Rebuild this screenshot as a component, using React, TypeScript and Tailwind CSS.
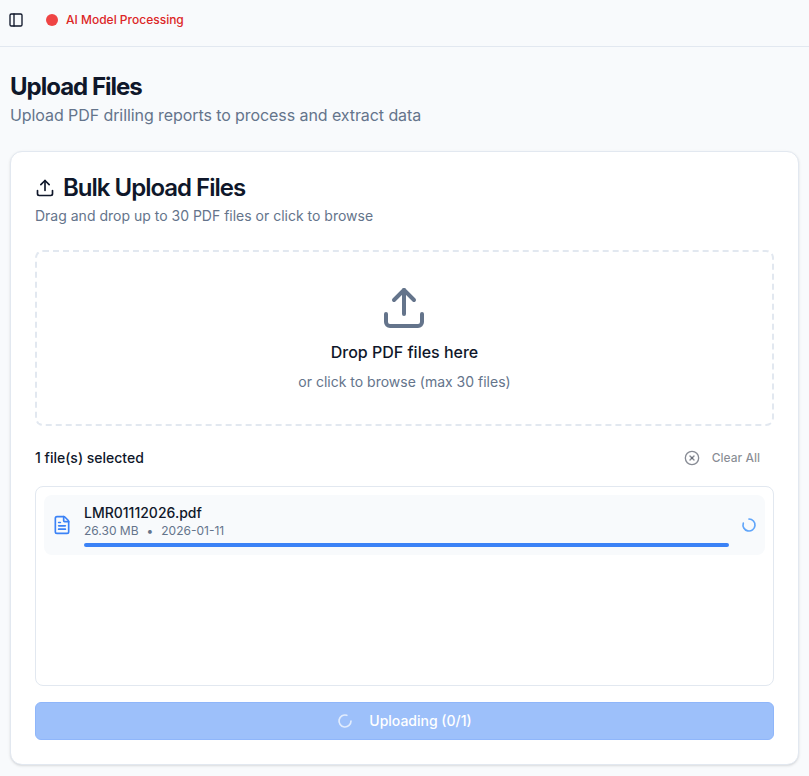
import React from 'react';
import { CircleX, FileText, Loader2, PanelLeft, Upload } from 'lucide-react';

const App: React.FC = () => {
  return (
    <div className="min-h-[776px] bg-[#f8fafc] font-['Inter','Liberation_Sans',sans-serif] text-[#0f172a]">
      <header className="flex h-[47px] items-start border-b border-[#e2e8f0] pl-[2px] pt-[6px]">
        <button className="flex h-7 w-7 items-center justify-center">
          <PanelLeft className="h-4 w-4" />
        </button>
        <div className="ml-4 flex h-7 items-center gap-2">
          <span className="h-3 w-3 rounded-full bg-[#ef4444]" />
          <span className="text-xs font-medium text-[#dc2626]">AI Model Processing</span>
        </div>
      </header>

      <main className="px-[10px] pt-6">
        <h1 className="text-2xl font-bold tracking-[-1px]">Upload Files</h1>
        <p className="text-base tracking-[-0.08px] text-[#64748b]">Upload PDF drilling reports to process and extract data</p>

        <section className="mt-6 rounded-xl border border-[#e2e8f0] bg-white shadow-sm">
          <div className="p-6">
            <h2 className="flex items-center gap-2 text-2xl leading-none font-semibold tracking-[-1px]">
              <Upload className="h-5 w-5" />
              Bulk Upload Files
            </h2>
            <p className="mt-1.5 text-sm text-[#64748b]">Drag and drop up to 30 PDF files or click to browse</p>
          </div>

          <div className="px-6 pb-6">
            <div className="flex flex-col items-center rounded-lg border-2 border-dashed border-[#e2e8f0] py-8">
              <Upload className="mr-px h-12 w-12 text-[#64748b]" />
              <p className="mt-2 text-base font-medium">Drop PDF files here</p>
              <p className="mt-2 text-sm text-[#64748b]">or click to browse (max 30 files)</p>
            </div>

            <div className="mt-3 flex h-10 items-center justify-between">
              <span className="text-sm font-medium">1 file(s) selected</span>
              <button className="flex items-center gap-3 pl-3 pr-[14px] text-xs font-medium text-[#0f172a]/50">
                <CircleX className="h-4 w-4" />
                Clear All
              </button>
            </div>

            <div className="mt-2 h-[200px] rounded-lg border border-[#e2e8f0] p-2">
              <div className="flex items-center gap-3 rounded-lg bg-[#f8fafc] p-2">
                <FileText className="h-5 w-5 shrink-0 text-[#3b82f6]" />
                <div className="min-w-0 flex-1">
                  <p className="text-sm font-medium">LMR01112026.pdf</p>
                  <p className="flex items-center gap-2 text-xs text-[#64748b]">
                    <span>26.30 MB</span>
                    <span>•</span>
                    <span>2026-01-11</span>
                  </p>
                  <div className="mt-1 h-1 rounded-full bg-[#3b82f6]" />
                </div>
                <Loader2 strokeWidth={2.5} className="h-4 w-4 shrink-0 -rotate-90 text-[#60a5fa]" />
              </div>
            </div>

            <button className="mt-4 flex h-[38px] w-full items-center justify-center gap-2 rounded-md border border-[#8fb6fa] bg-[#9dc0fa] text-sm font-medium text-white">
              <Loader2 strokeWidth={2.5} className="mr-2 h-4 w-4 opacity-70" />
              Uploading (0/1)
            </button>
          </div>
        </section>
      </main>
    </div>
  );
};

export default App;
